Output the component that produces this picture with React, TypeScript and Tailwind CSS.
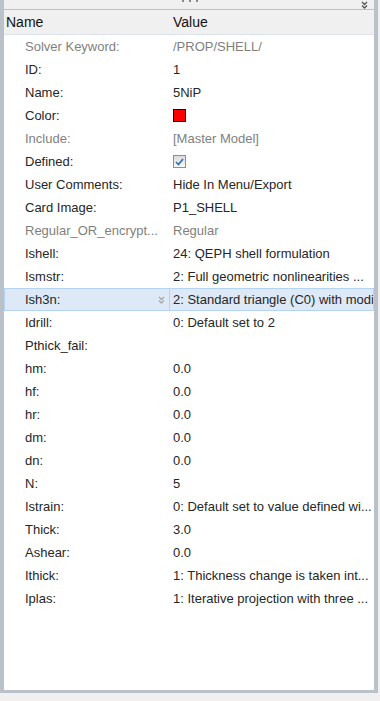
import React from "react";

type Row = {
  name: string;
  value?: string;
  dim?: boolean;
  kind?: "color" | "check";
  selected?: boolean;
};

const rows: Row[] = [
  { name: "Solver Keyword:", value: "/PROP/SHELL/", dim: true },
  { name: "ID:", value: "1" },
  { name: "Name:", value: "5NiP" },
  { name: "Color:", kind: "color" },
  { name: "Include:", value: "[Master Model]", dim: true },
  { name: "Defined:", kind: "check" },
  { name: "User Comments:", value: "Hide In Menu/Export" },
  { name: "Card Image:", value: "P1_SHELL" },
  { name: "Regular_OR_encrypt...", value: "Regular", dim: true },
  { name: "Ishell:", value: "24: QEPH shell formulation" },
  { name: "Ismstr:", value: "2: Full geometric nonlinearities ..." },
  { name: "Ish3n:", value: "2: Standard triangle (C0) with modified", selected: true },
  { name: "Idrill:", value: "0: Default set to 2" },
  { name: "Pthick_fail:", value: "" },
  { name: "hm:", value: "0.0" },
  { name: "hf:", value: "0.0" },
  { name: "hr:", value: "0.0" },
  { name: "dm:", value: "0.0" },
  { name: "dn:", value: "0.0" },
  { name: "N:", value: "5" },
  { name: "Istrain:", value: "0: Default set to value defined wi..." },
  { name: "Thick:", value: "3.0" },
  { name: "Ashear:", value: "0.0" },
  { name: "Ithick:", value: "1: Thickness change is taken int..." },
  { name: "Iplas:", value: "1: Iterative projection with three ..." },
];

const DoubleDown = ({ color }: { color: string }) => (
  <svg width="7" height="8" viewBox="0 0 7 8">
    <path d="M1 1 L3.5 3.5 L6 1 M1 4.5 L3.5 7 L6 4.5" fill="none" stroke={color} strokeWidth="1.3" />
  </svg>
);

export default function App() {
  return (
    <div
      className="w-[380px] h-[701px] bg-[#f0f0f0] text-[13px] text-[#262626] overflow-hidden"
      style={{ fontFamily: '"Liberation Sans", Arial, sans-serif' }}
    >
      <div className="w-[378px] h-[693px] flex flex-col border-l-[4px] border-r-[4px] border-b-[3px] border-[#bac1c8] bg-white">
        {/* top strip */}
        <div className="h-[10px] shrink-0 bg-[#f0f0f0] border-b border-[#bac1c8] relative">
          <div className="absolute left-[178px] top-0 flex gap-[5px]">
            <span className="w-[2px] h-[2px] bg-[#8a8a8a]" />
            <span className="w-[2px] h-[2px] bg-[#8a8a8a]" />
            <span className="w-[2px] h-[2px] bg-[#8a8a8a]" />
          </div>
          <div className="absolute right-[6px] top-[1px]">
            <DoubleDown color="#555" />
          </div>
        </div>
        {/* header */}
        <div className="h-[25px] shrink-0 flex items-center bg-[#f0f0f0] border-b border-[#dde3ea] text-[#111] text-[14px]">
          <div className="w-[166px] pl-[2px]">Name</div>
          <div className="pl-[3px]">Value</div>
        </div>
        {/* rows */}
        <div className="flex flex-col">
          {rows.map((r) => (
            <div
              key={r.name}
              className={
                r.selected
                  ? "h-[23px] flex items-center bg-[#dde9f6] border border-[#b5d3f3]"
                  : "h-[23px] flex items-center border border-transparent"
              }
            >
              <div
                className={
                  "w-[165px] h-full flex items-center pl-[20px] pr-[4px] whitespace-nowrap overflow-hidden " +
                  (r.dim ? "text-[#7f7f7f]" : "") +
                  (r.selected ? " border-r border-[#b5d3f3]" : "")
                }
              >
                <span className="flex-1 overflow-hidden">{r.name}</span>
                {r.selected && <DoubleDown color="#a8a8a8" />}
              </div>
              <div
                className={
                  "flex-1 pl-[3px] whitespace-nowrap overflow-hidden " + (r.dim ? "text-[#7f7f7f]" : "")
                }
              >
                {r.kind === "color" ? (
                  <div className="w-[13px] h-[13px] bg-[#ff0000] border border-black" />
                ) : r.kind === "check" ? (
                  <div className="w-[13px] h-[13px] border border-[#8e8f8f] bg-gradient-to-b from-[#dcdcdc] to-[#f8f8f8] flex items-center justify-center">
                    <svg width="9" height="8" viewBox="0 0 9 8">
                      <path d="M1 4 L3.5 6.5 L8 1" fill="none" stroke="#2f6fb6" strokeWidth="1.7" />
                    </svg>
                  </div>
                ) : (
                  r.value
                )}
              </div>
            </div>
          ))}
        </div>
      </div>
    </div>
  );
}
